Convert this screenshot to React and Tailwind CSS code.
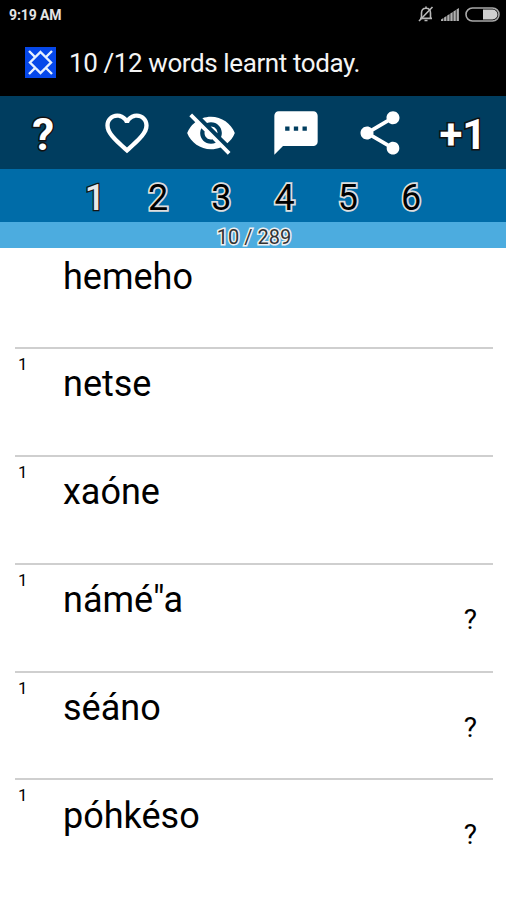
import { MdFavoriteBorder, MdShare, MdSms, MdVisibilityOff } from "react-icons/md";

const LEVELS = [1, 2, 3, 4, 5, 6];

const WORDS = [
  { text: "hemeho" },
  { text: "netse", level: 1 },
  { text: "xaóne", level: 1 },
  { text: 'námé"a', level: 1, unknown: true },
  { text: "séáno", level: 1, unknown: true },
  { text: "póhkéso", level: 1, unknown: true },
];

function StatusBar() {
  return (
    <div className="h-[30px] flex items-center justify-between pl-[9px] pr-[6px] text-[#e4e4e4]">
      <span className="text-[14px] font-bold tracking-[-0.1px]">9:19 AM</span>
      <div className="flex items-center -mt-0.5">
        <svg className="w-4 h-[18px] mr-[7px]" viewBox="0 0 16 18" fill="none" stroke="#b8b8b8" strokeWidth="1.6">
          <path d="M3.5 13V8C3.5 5 5 3.2 8 3.2S12.5 5 12.5 8v5M2 13.4h12M8 1.5v2" />
          <path d="M6.5 15.5h3M1 16L14.5 2" />
        </svg>
        <svg className="w-[18px] h-[13px] mr-[6px]" viewBox="0 0 18 13" fill="#b0b0b0">
          <path d="M0 11.5L2.4 10V13H0zM3.1 9.6l2.4-1.5V13H3.1zM6.2 7.6l2.4-1.5V13H6.2zM9.3 5.5L11.7 4v9H9.3zM12.4 3.4l2.4-1.5V13h-2.4zM15.5 1.4L17.9 0v13h-2.4z" />
        </svg>
        <svg className="w-[35px] h-[15px]" viewBox="0 0 35 15">
          <rect x="1" y="1" width="33" height="13" rx="6.5" fill="none" stroke="#a8a8a8" strokeWidth="1.6" />
          <path d="M18 2.5h9.5a5 5 0 0 1 0 10H18z" fill="#d0d0d0" />
        </svg>
      </div>
    </div>
  );
}

function Toast() {
  return (
    <div className="h-[66px] flex items-center pl-[25px] text-[#f4f4f4]">
      <svg className="w-[31px] h-[31px] shrink-0 -mt-px" viewBox="0 0 31 31">
        <rect width="31" height="31" fill="#0648ea" />
        <path
          d="M15.5 5L26 15.5 15.5 26 5 15.5zM4 4l7 7M27 4l-7 7M4 27l7-7M27 27l-7-7"
          fill="none"
          stroke="#e6f0ff"
          strokeWidth="2.4"
        />
      </svg>
      <span className="ml-[13px] text-[26px] leading-[30px] tracking-[-0.4px] whitespace-nowrap">10 /12 words learnt today.</span>
    </div>
  );
}

function Toolbar() {
  return (
    <div className="h-[73px] pl-px grid grid-cols-6 place-items-center bg-[#003d5f] text-white">
      <span className="pt-[4px] text-[44px] leading-none font-bold [-webkit-text-stroke:3px_#111] [paint-order:stroke]">?</span>
      <MdFavoriteBorder size={52} />
      <MdVisibilityOff size={52} />
      <MdSms size={52} />
      <MdShare size={52} />
      <span className="pt-[5px] pr-0.5 text-[42px] leading-none font-bold [-webkit-text-stroke:3px_#111] [paint-order:stroke]">+1</span>
    </div>
  );
}

function LevelTabs() {
  return (
    <div className="h-[53px] px-[63.25px] pt-[5px] grid grid-cols-6 place-items-center bg-[#006ca8]">
      {LEVELS.map((level) => (
        <span
          key={level}
          className={
            level === 1
              ? "text-[36px] leading-none text-[#e8e8e8] font-medium [-webkit-text-stroke:2.5px_#151515] [paint-order:stroke]"
              : "text-[36px] leading-none text-black [-webkit-text-stroke:3.5px_#dedede] [paint-order:stroke]"
          }
        >
          {level}
        </span>
      ))}
    </div>
  );
}

function WordRow({ word }) {
  return (
    <li className="h-[107.9px] flex items-start pl-[3px] pr-[16px] border-b-2 border-[#cfcfcf] last:border-0 text-black">
      <span className="w-[45px] pt-[5px] text-[17px] leading-5">{word.level}</span>
      <span className="flex-1 pt-[14.5px] text-[36px] leading-[42px]">{word.text}</span>
      {word.unknown && <span className="pt-[39px] text-[28px] leading-8">?</span>}
    </li>
  );
}

export default function App() {
  return (
    <div className="w-[506px] h-[900px] overflow-hidden bg-white font-['Roboto',sans-serif]">
      <header className="bg-black">
        <StatusBar />
        <Toast />
      </header>
      <Toolbar />
      <LevelTabs />
      <div className="h-[26px] pt-1 pl-0.5 flex items-center justify-center bg-[#4cacdf] text-[20px] text-[#333] [-webkit-text-stroke:3px_#f0f0f0] [paint-order:stroke]">
        10 / 289
      </div>
      <ul className="-mt-[7px] pl-[15px] pr-[13px]">
        {WORDS.map((word) => (
          <WordRow key={word.text} word={word} />
        ))}
      </ul>
    </div>
  );
}
